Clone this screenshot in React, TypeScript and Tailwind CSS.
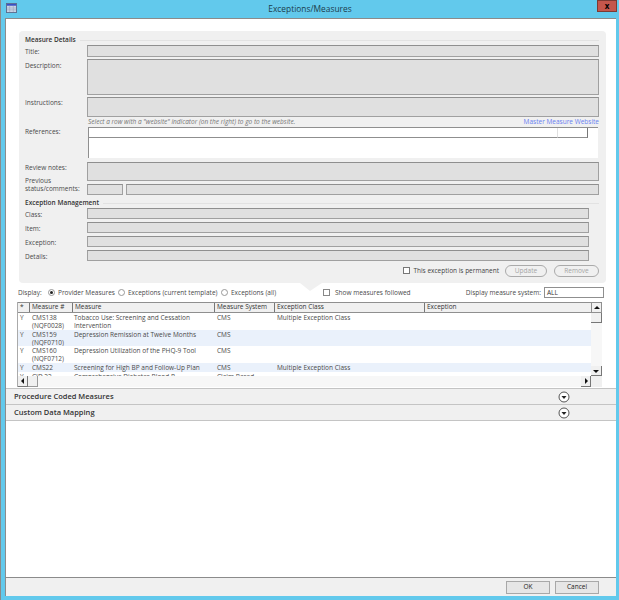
const font = { fontFamily: '"Open Sans", "Noto Sans", sans-serif' };

function Field({ className = "" }: { className?: string }) {
  return <div className={`border border-[#a0a0a0] border-t-[#8f8f8f] bg-[#e0e0e0] ${className}`} />;
}

function Row({ label, h, right = "mr-[7px]", pt = "pt-[3px]", className = "" }: { label: string; h: string; right?: string; pt?: string; className?: string }) {
  return (
    <div className={`flex ${className}`}>
      <div className={`w-[62px] shrink-0 ${pt} text-[#4a4a4a]`}>{label}</div>
      <Field className={`flex-1 ${h} ${right}`} />
    </div>
  );
}

function Radio({ on }: { on?: boolean }) {
  return (
    <span className="flex h-[7px] w-[7px] shrink-0 items-center justify-center rounded-full border border-[#999] bg-white">
      {on && <span className="h-[3px] w-[3px] rounded-full bg-[#222]" />}
    </span>
  );
}

function Arrow({ dir }: { dir: "up" | "down" | "left" | "right" }) {
  const pts = { up: "1,5 4,2 7,5", down: "1,3 4,6 7,3", left: "5,1 2,4 5,7", right: "3,1 6,4 3,7" };
  return (
    <svg viewBox="0 0 8 8" className="h-[8px] w-[8px]">
      <polygon points={pts[dir]} fill="#111" />
    </svg>
  );
}

function SectionBar({ title }: { title: string }) {
  return (
    <div className="flex h-[16px] items-center border-b border-[#c4c4c4] bg-[#f0f0f0] pl-[8px] pr-[46px] text-[7.5px] font-semibold text-[#333]">
      <span className="flex-1 pb-[2px]">{title}</span>
      <svg viewBox="0 0 12 12" className="h-[12px] w-[12px]">
        <circle cx="6" cy="6" r="5" fill="#fff" stroke="#555" strokeWidth="1" />
        <polygon points="3.5,5 8.5,5 6,8" fill="#222" />
      </svg>
    </div>
  );
}

const rows = [
  { h: "h-[17px]", bg: "bg-white", star: "Y", id: ["CMS138", "(NQF0028)"], m: "Tobacco Use: Screening and Cessation Intervention", s: "CMS", c: "Multiple Exception Class" },
  { h: "h-[16px]", bg: "bg-[#eaf1fb]", star: "Y", id: ["CMS159", "(NQF0710)"], m: "Depression Remission at Twelve Months", s: "CMS", c: "" },
  { h: "h-[17px]", bg: "bg-white", star: "Y", id: ["CMS160", "(NQF0712)"], m: "Depression Utilization of the PHQ-9 Tool", s: "CMS", c: "" },
  { h: "h-[9px]", bg: "bg-[#eaf1fb]", star: "Y", id: ["CMS22"], m: "Screening for High BP and Follow-Up Plan", s: "CMS", c: "Multiple Exception Class" },
  { h: "h-[4px]", bg: "bg-white", star: "Y", id: ["CID 22"], m: "Comprehensive Diabetes Blood P", s: "Claim Based", c: "" },
];

const heads = [
  { t: "*", w: "w-[12px]" },
  { t: "Measure #", w: "w-[43px]" },
  { t: "Measure", w: "w-[142px]" },
  { t: "Measure System", w: "w-[60px]" },
  { t: "Exception Class", w: "w-[150px]" },
  { t: "Exception", w: "flex-1" },
];

export default function App() {
  return (
    <div style={font} className="flex h-[600px] w-[619px] flex-col overflow-hidden border-l border-[#8a8a8a] bg-[#62c9ec] text-[6.5px] leading-[8px] text-[#444]">
      {/* title bar */}
      <div className="relative flex h-[18px] shrink-0 items-center justify-center text-[8.4px] text-[#1c3d4c]">
        <svg viewBox="0 0 12 11" className="absolute left-[5px] top-[3px] h-[10px] w-[11px]">
          <rect x="0.5" y="0.5" width="11" height="10" fill="#c9d3e6" stroke="#5a6a8c" />
          <rect x="1" y="1" width="10" height="2" fill="#3b50c4" />
          <path d="M1 5.5h10M1 7.5h10M4 3v7M8 3v7" stroke="#8f9ab0" strokeWidth="0.5" />
        </svg>
        <span>Exceptions/Measures</span>
        <div className="absolute right-[2px] top-0 flex h-[12px] w-[20px] items-center justify-center border border-[#7d3a33] bg-[#c4564c] text-[8px] font-bold leading-none text-black">
          x
        </div>
      </div>

      {/* window body */}
      <div className="ml-[4px] mr-[3px] flex flex-1 flex-col overflow-hidden border-l border-t border-[#8b8b8b] bg-white">
        <div className="flex flex-1 flex-col">
          {/* details panel */}
          <div className="relative ml-[13px] mr-[10px] mt-[12px] h-[252px] shrink-0 rounded-[4px] bg-[#f0f0f0] pl-[6px] pt-[4px]">
            <div className="flex h-[10px] items-center pr-[7px]">
              <span className="mr-[4px] font-semibold text-[#333]">Measure Details</span>
              <span className="h-px flex-1 bg-[#e2e2e2]" />
            </div>
            <Row label="Title:" h="h-[12px]" />
            <Row label="Description:" h="h-[36px]" className="mt-[2px]" />
            <Row label="Instructions:" h="h-[20px]" pt="pt-[2px]" className="mt-[2px]" />
            <div className="flex h-[10px] items-center pl-[63px] pr-[7px] text-[6.5px] italic text-[#777]">
              <span className="flex-1">Select a row with a "website" indicator (on the right) to go to the website.</span>
              <span className="not-italic text-[#6a80f0]">Master Measure Website</span>
            </div>
            <div className="flex">
              <div className="w-[63px] shrink-0 pt-[1px] text-[#4a4a4a]">References:</div>
              <div className="mr-[8px] h-[31px] flex-1 border-l border-[#8f8f8f] bg-white">
                <div className="flex h-[11px] border-t border-[#8f8f8f]">
                  <div className="flex-1 border-b border-r border-[#8f8f8f] border-r-[#e0e0e0]" />
                  <div className="w-[30px] border-b border-r border-[#777] border-b-[#8f8f8f]" />
                  <div className="w-[10px]" />
                </div>
              </div>
            </div>
            <Row label="Review notes:" h="h-[19px]" pt="pt-[2px]" className="mt-[4px]" />
            <div className="-mt-[4px] flex pr-[7px]">
              <div className="w-[62px] shrink-0 text-[#4a4a4a]">
                Previous
                <br />
                status/comments:
              </div>
              <div className="mt-[7px] flex flex-1 gap-[3px]">
                <Field className="h-[11px] w-[36px]" />
                <Field className="h-[11px] flex-1" />
              </div>
            </div>
            <div className="mt-[3px] flex h-[10px] items-center pr-[7px]">
              <span className="mr-[4px] font-semibold text-[#333]">Exception Management</span>
              <span className="h-px flex-1 bg-[#e2e2e2]" />
            </div>
            {["Class:", "Item:", "Exception:", "Details:"].map((l, i) => (
              <Row key={l} label={l} h="h-[11px]" right="mr-[17px]" className={i === 0 ? "" : "mt-[3px]"} />
            ))}
            <div className="mt-[3px] flex h-[13px] items-center justify-end pr-[7px]">
              <span className="mr-[3px] h-[7px] w-[7px] border border-[#777] bg-white" />
              <span className="mr-[6px] text-[#444]">This exception is permanent</span>
              <span className="mr-[7px] flex h-[12px] w-[42px] items-center justify-center rounded-[6px] border border-[#aaa] text-[#a5a5a5]">Update</span>
              <span className="flex h-[12px] w-[45px] items-center justify-center rounded-[6px] border border-[#aaa] text-[#a5a5a5]">Remove</span>
            </div>
            {/* pointer under the panel */}
            <svg viewBox="0 0 22 9" className="absolute left-[281px] top-full h-[9px] w-[22px]">
              <polygon points="0,0 22,0 10,8" fill="#f0f0f0" />
            </svg>
          </div>

          {/* display options */}
          <div className="ml-[12px] mr-[12px] mt-[1px] flex h-[17px] shrink-0 items-center whitespace-nowrap text-[#4a4a4a]">
            <span className="mr-[6px] w-[24px]">Display:</span>
            <Radio on />
            <span className="ml-[3px] mr-[4px] w-[56px]">Provider Measures</span>
            <Radio />
            <span className="ml-[3px] mr-[4px] w-[89px]">Exceptions (current template)</span>
            <Radio />
            <span className="ml-[3px] w-[45px]">Exceptions (all)</span>
            <span className="ml-[47px] mr-[5px] h-[7px] w-[7px] border border-[#888] bg-white" />
            <span>Show measures followed</span>
            <span className="ml-auto mr-[3px]">Display measure system:</span>
            <div className="h-[11px] w-[60px] border border-[#8f8f8f] bg-white pl-[2px] pt-px text-[#333]">ALL</div>
          </div>

          {/* measures table */}
          <div className="ml-[11px] mr-[14px] mt-px flex h-[85px] shrink-0 flex-col overflow-hidden border-l border-[#aaa] text-[#4a4a4a]">
            <div className="flex h-[74px] shrink-0">
              <div className="min-w-0 flex-1">
                <div className="flex h-[11px] border-y border-[#8f8f8f] bg-[#f0f0f0]">
                  {heads.map((h) => (
                    <div key={h.t} className={`${h.w} truncate border-r border-[#777] pl-[2px] text-[#333] last:border-r-0`}>
                      {h.t}
                    </div>
                  ))}
                </div>
                {rows.map((r) => (
                  <div key={r.id[0]} className={`flex overflow-hidden ${r.h} ${r.bg} pt-px`}>
                    <div className="w-[12px] shrink-0 pl-[2px]">{r.star}</div>
                    <div className="w-[43px] shrink-0 pl-[2px]">
                      {r.id.map((x) => (
                        <div key={x}>{x}</div>
                      ))}
                    </div>
                    <div className="w-[142px] shrink-0 pl-[1px] pr-[4px]">{r.m}</div>
                    <div className="w-[60px] shrink-0 pl-[2px]">{r.s}</div>
                    <div className="w-[150px] shrink-0 pl-[2px]">{r.c}</div>
                  </div>
                ))}
              </div>
              {/* vertical scrollbar */}
              <div className="flex w-[11px] shrink-0 flex-col bg-[#f7f7f7]">
                <div className="flex h-[11px] items-center justify-center border border-[#8f8f8f] bg-[#f0f0f0]">
                  <Arrow dir="up" />
                </div>
                <div className="h-[10px] border-b border-r border-[#777] bg-[#f0f0f0]" />
                <div className="flex-1" />
                <div className="flex h-[10px] items-center justify-center border-b border-r border-[#777] bg-[#f0f0f0]">
                  <Arrow dir="down" />
                </div>
              </div>
            </div>
            {/* horizontal scrollbar */}
            <div className="flex h-[11px] shrink-0 bg-[#f7f7f7]">
              <div className="flex w-[10px] items-center justify-center border-b border-r border-[#777] bg-[#f0f0f0]">
                <Arrow dir="left" />
              </div>
              <div className="w-[10px] border-b border-r border-[#999] bg-[#f0f0f0]" />
              <div className="flex-1" />
              <div className="flex w-[10px] items-center justify-center border-b border-r border-[#777] bg-[#f0f0f0]">
                <Arrow dir="right" />
              </div>
              <div className="w-[11px] bg-[#f0f0f0]" />
            </div>
          </div>

          {/* collapsed sections */}
          <div className="mt-[1px] border-t border-[#c4c4c4]">
            <SectionBar title="Procedure Coded Measures" />
            <SectionBar title="Custom Data Mapping" />
          </div>
        </div>

        {/* footer */}
        <div className="flex h-[19px] shrink-0 items-center justify-end gap-[5px] border-t border-[#8b8b8b] bg-[#f0f0f0] pr-[17px]">
          <div className="flex h-[13px] w-[44px] items-center justify-center border border-[#a8a8a8] bg-[#e6e6e6] text-[#222]">OK</div>
          <div className="flex h-[13px] w-[44px] items-center justify-center border border-[#a8a8a8] bg-[#e6e6e6] text-[#222]">Cancel</div>
        </div>
      </div>
      <div className="h-[4px] shrink-0" />
    </div>
  );
}
